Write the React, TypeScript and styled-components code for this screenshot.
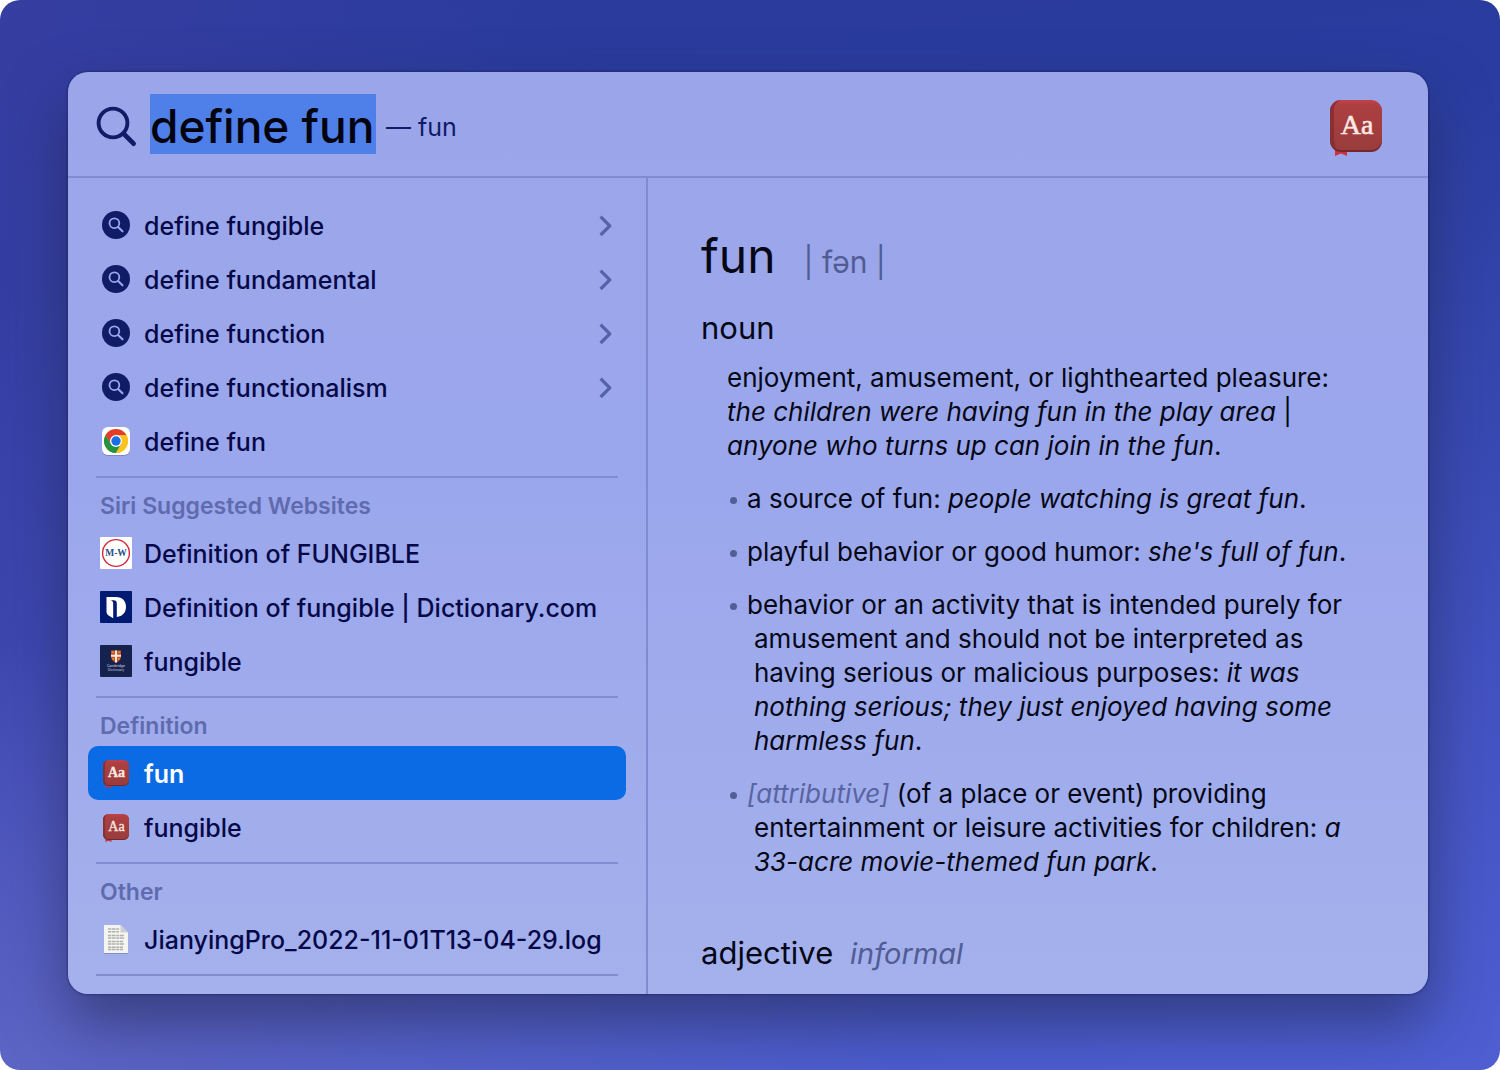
import React from "react";
import styled, { createGlobalStyle } from "styled-components";

const GlobalStyle = createGlobalStyle`
  *, *::before, *::after { box-sizing: border-box; }
  body {
    margin: 0;
    background: #ffffff;
    font-family: Inter, "Liberation Sans", sans-serif;
    -webkit-font-smoothing: antialiased;
  }
  button, input { font: inherit; }
`;

const Desktop = styled.div`
  min-height: 100vh;
  display: flex;
  padding: 72px 72px 76px 68px;
  border-radius: 20px;
  overflow: hidden;
  background:
    radial-gradient(ellipse 60% 40% at 0% 100%, rgba(100, 108, 198, 0.75), rgba(100, 108, 198, 0)),
    linear-gradient(100deg, rgba(68, 66, 168, 0.45), rgba(68, 66, 168, 0) 35%),
    linear-gradient(172deg, #2a3a9b 0%, #2a3c9f 22%, #4453c2 72%, #4f5fd2 100%);
`;

const Panel = styled.main`
  flex: 1;
  display: flex;
  flex-direction: column;
  min-width: 0;
  border-radius: 20px;
  overflow: hidden;
  background: linear-gradient(180deg, #9ba6ea 0%, #9ba7ec 45%, #a4b1ec 100%);
  box-shadow:
    0 0 2px 1px rgba(22, 28, 90, 0.45),
    0 28px 60px rgba(34, 40, 80, 0.6);
`;

const SearchBar = styled.header`
  display: flex;
  align-items: center;
  height: 106px;
  padding: 4px 42px 0 28px;
  border-bottom: 2px solid #808cd0;
`;

const SearchInput = styled.input`
  width: 226px;
  height: 60px;
  margin: 0 10px 4px 13px;
  padding: 4px 0 0;
  border: 0;
  outline: 0;
  border-radius: 0;
  background: #4f80e9;
  color: #02030f;
  font-size: 46px;
  font-weight: 500;
`;

const Completion = styled.span`
  flex: 1;
  padding-top: 2px;
  color: #101a66;
  font-size: 25px;
  line-height: 34px;
`;

const Columns = styled.div`
  flex: 1;
  display: flex;
`;

const Sidebar = styled.nav`
  flex: 0 0 580px;
  padding: 20px 20px 18px;
  border-right: 2px solid #808cd0;
`;

const Section = styled.section`
  padding-bottom: 8px;
  &::after {
    content: "";
    display: block;
    height: 2px;
    margin: 8px 8px -8px;
    background: #808dd0;
  }
`;

const SectionTitle = styled.h2`
  height: 48px;
  margin: 0;
  padding: 13px 12px 0;
  color: #5f6bae;
  font-size: 23px;
  line-height: 30px;
  font-weight: 600;
`;

const ResultList = styled.ul`
  margin: 0;
  padding: 0;
  list-style: none;
`;

const ResultButton = styled.button<{ $selected?: boolean }>`
  display: flex;
  align-items: center;
  gap: 12px;
  width: 100%;
  height: 54px;
  padding: 0 12px;
  border: 0;
  border-radius: 10px;
  background: ${(p) => (p.$selected ? "#0a6be4" : "transparent")};
  color: ${(p) => (p.$selected ? "#ffffff" : "#060848")};
  font-size: 25px;
  font-weight: ${(p) => (p.$selected ? 600 : 500)};
  text-align: left;
  white-space: nowrap;
`;

const IconSlot = styled.span`
  display: flex;
  flex: 0 0 32px;
  justify-content: center;
`;

const ResultLabel = styled.span`
  flex: 1;
  padding-top: 2px;
  line-height: 34px;
`;

const Article = styled.article`
  flex: 1;
  min-width: 0;
  padding: 50px 80px 20px 53px;
  color: #050716;
`;

const WordLine = styled.div`
  display: flex;
  align-items: baseline;
  gap: 28px;
`;

const Word = styled.h1`
  margin: 0;
  font-size: 48px;
  line-height: 56px;
  font-weight: 400;
`;

const Pronunciation = styled.span`
  color: #515c94;
  font-size: 30px;
`;

const PartOfSpeech = styled.h2<{ $first?: boolean }>`
  margin: ${(p) => (p.$first ? "25px 0 14px" : "55px 0 0")};
  font-size: 31px;
  line-height: 38px;
  font-weight: 400;
`;

const Register = styled.em`
  margin-left: 8px;
  color: #515c94;
  font-size: 29px;
`;

const Definition = styled.p`
  margin: 0 0 19px 26px;
  font-size: 26px;
  line-height: 34px;
`;

const Senses = styled.ul`
  display: grid;
  gap: 19px;
  margin: 0 0 0 26px;
  padding: 0;
  list-style: none;
`;

const Sense = styled.li`
  padding-left: 27px;
  text-indent: -27px;
  font-size: 26px;
  line-height: 34px;
  &::before {
    content: "";
    display: inline-block;
    width: 7px;
    height: 7px;
    margin: 0 10px 0 3px;
    border-radius: 50%;
    background: #525e96;
    vertical-align: 4px;
  }
`;

const Usage = styled.em`
  color: #5964a0;
`;

function SearchGlyph() {
  return (
    <svg width="41" height="42" viewBox="0 -1 41 42" fill="none" stroke="#101c66" aria-hidden="true">
      <circle cx="17" cy="17" r="14.400" strokeWidth="3.900" />
      <path d="M27.600 27.600 37.600 37.600" strokeWidth="4.800" strokeLinecap="round" />
    </svg>
  );
}

function SuggestionIcon() {
  return (
    <svg width="28" height="28" viewBox="0 0 28 28" fill="none" aria-hidden="true">
      <circle cx="14" cy="14" r="14" fill="#101c66" />
      <circle cx="12.4" cy="12.2" r="4.9" stroke="#9ba7ec" strokeWidth="1.8" />
      <path d="m16.1 15.9 4.4 4.4" stroke="#9ba7ec" strokeWidth="2.1" strokeLinecap="round" />
    </svg>
  );
}

function Chevron() {
  return (
    <svg width="16" height="24" viewBox="0 0 16 24" fill="none" stroke="#5562a8" aria-hidden="true">
      <path d="m2.600 3.600 9.200 9.200-9.200 9.200" strokeWidth="3.200" strokeLinejoin="round" />
    </svg>
  );
}

function ChromeIcon() {
  return (
    <svg width="30" height="30" viewBox="0 0 30 30" aria-hidden="true">
      <rect x="1" y="2" width="28" height="28" rx="6" fill="#5b68ad" opacity="0.5" />
      <rect x="1" y="1" width="28" height="28" rx="6" fill="#ffffff" />
      <circle cx="15" cy="15" r="12" fill="#fcc31e" />
      <path d="M15 9h10.4A12 12 0 0 0 4.6 9l5.2 9Z" fill="#e33b2e" />
      <path d="M4.6 9A12 12 0 0 0 15 27l5.2-9L15 15 9.8 18Z" fill="#229342" />
      <path d="M25.4 9A12 12 0 0 1 15 27l5.2-9A6 6 0 0 0 15 9Z" fill="#fcc31e" />
      <circle cx="15" cy="15" r="6" fill="#ffffff" />
      <circle cx="15" cy="15" r="4.7" fill="#1a6fe8" />
    </svg>
  );
}

function MerriamIcon() {
  return (
    <svg width="32" height="32" viewBox="0 0 32 32" aria-hidden="true">
      <rect width="32" height="32" rx="1" fill="#ffffff" />
      <circle cx="16" cy="16" r="13.4" fill="none" stroke="#d8283c" strokeWidth="1.4" />
      <text x="16" y="19.4" textAnchor="middle" fontFamily="Liberation Serif, serif" fontWeight="700" fontSize="9.5" fill="#1d4f86">
        M-W
      </text>
    </svg>
  );
}

function DictionaryComIcon() {
  return (
    <svg width="32" height="32" viewBox="0 0 32 32" aria-hidden="true">
      <rect width="32" height="32" rx="1" fill="#001a72" />
      <path d="M6.500 6H16c6.500 0 10 4 10 9.800S22.500 25.500 16.800 26V12.500c0-2-1-3.200-3.200-3.200h-3c1.800.4 2.600 1.500 2.600 3.400v14.500L8.600 24.500C7.200 23.500 6.500 22.400 6.500 20.500Z" fill="#ffffff" />
    </svg>
  );
}

function CambridgeIcon() {
  return (
    <svg width="32" height="32" viewBox="0 0 32 32" aria-hidden="true">
      <rect width="32" height="32" rx="1" fill="#16224e" />
      <path d="M11 5.500h10v6c0 3-2 5-5 6.200-3-1.200-5-3.200-5-6.200Z" fill="#c9502e" />
      <path d="M15 5.500h2v4.200h4v2h-4v5.600l-1 .4-1-.4v-5.600h-4v-2h4Z" fill="#f6ead6" />
      <path d="M12 7h1.500M18.500 7H20M12.500 13.800h1.400M18 13.800h1.500" stroke="#f2b53c" strokeWidth="1.200" />
      <text x="16" y="22" textAnchor="middle" fontFamily="Inter, sans-serif" fontSize="3.400" fill="#c3c8dc">
        Cambridge
      </text>
      <text x="16" y="26" textAnchor="middle" fontFamily="Inter, sans-serif" fontSize="3.400" fill="#a9b0cc">
        Dictionary
      </text>
    </svg>
  );
}

function BookIcon({ size }: { size: number }) {
  return (
    <svg width={size} height={size} viewBox="0 -2 60 60" aria-hidden="true">
      <defs>
        <linearGradient id="cover" x1="0" y1="0" x2="0" y2="1">
          <stop offset="0" stopColor="#c24248" />
          <stop offset="0.12" stopColor="#ac3f41" />
          <stop offset="1" stopColor="#9a3c3c" />
        </linearGradient>
      </defs>
      <path d="M9 50h12v8l-6-2.400-6 2.400Z" fill="#cf3039" />
      <rect x="4" y="3" width="52" height="51" rx="11" fill="#74282b" />
      <rect x="4" y="2" width="52" height="50" rx="11" fill="url(#cover)" />
      <path d="M15 2a11 11 0 0 0-11 11v28a11 11 0 0 0 7 10c-2-3-3-6-3-10V12c0-5 3-8.500 7-10Z" fill="#7f2a2d" opacity="0.7" />
      <text x="31" y="36" textAnchor="middle" fontFamily="Liberation Serif, serif" fontSize="28" fill="#fbe9e2" stroke="#fbe9e2" strokeWidth="0.6">
        Aa
      </text>
    </svg>
  );
}

function LogFileIcon() {
  return (
    <svg width="28" height="32" viewBox="0 0 28 32" aria-hidden="true">
      <path d="M2 3h17l7 7v21H2Z" fill="#5f6cae" opacity="0.5" />
      <path d="M2 2h16.500L26 9.500V30H2Z" fill="#f4f4f1" />
      <path d="M18.500 2 26 9.500h-7.500Z" fill="#cfcfcd" />
      <g stroke="#b0b0ad" strokeWidth="1.500" strokeDasharray="3 .6 4 .7">
        <path d="M6 6h11M6 8.800h11M6 12.500h16M6 15h16M6 18.500h15M6 21h16M6 24.200h15M6 26.500h15" />
      </g>
    </svg>
  );
}

type Result = {
  label: string;
  icon: React.ReactNode;
  chevron?: boolean;
  selected?: boolean;
};

const sections: { title?: string; results: Result[] }[] = [
  {
    results: [
      { label: "define fungible", icon: <SuggestionIcon />, chevron: true },
      { label: "define fundamental", icon: <SuggestionIcon />, chevron: true },
      { label: "define function", icon: <SuggestionIcon />, chevron: true },
      { label: "define functionalism", icon: <SuggestionIcon />, chevron: true },
      { label: "define fun", icon: <ChromeIcon /> },
    ],
  },
  {
    title: "Siri Suggested Websites",
    results: [
      { label: "Definition of FUNGIBLE", icon: <MerriamIcon /> },
      { label: "Definition of fungible | Dictionary.com", icon: <DictionaryComIcon /> },
      { label: "fungible", icon: <CambridgeIcon /> },
    ],
  },
  {
    title: "Definition",
    results: [
      { label: "fun", icon: <BookIcon size={30} />, selected: true },
      { label: "fungible", icon: <BookIcon size={30} /> },
    ],
  },
  {
    title: "Other",
    results: [{ label: "JianyingPro_2022-11-01T13-04-29.log", icon: <LogFileIcon /> }],
  },
];

export default function App() {
  return (
    <>
      <GlobalStyle />
      <Desktop>
        <Panel>
          <SearchBar>
            <SearchGlyph />
            <SearchInput type="text" aria-label="Search" defaultValue="define fun" spellCheck={false} />
            <Completion>— fun</Completion>
            <BookIcon size={60} />
          </SearchBar>
          <Columns>
            <Sidebar>
              {sections.map((section, i) => (
                <Section key={i}>
                  {section.title && <SectionTitle>{section.title}</SectionTitle>}
                  <ResultList>
                    {section.results.map((r) => (
                      <li key={r.label}>
                        <ResultButton type="button" $selected={r.selected}>
                          <IconSlot>{r.icon}</IconSlot>
                          <ResultLabel>{r.label}</ResultLabel>
                          {r.chevron && <Chevron />}
                        </ResultButton>
                      </li>
                    ))}
                  </ResultList>
                </Section>
              ))}
            </Sidebar>
            <Article>
              <WordLine>
                <Word>fun</Word>
                <Pronunciation>| fən |</Pronunciation>
              </WordLine>
              <PartOfSpeech $first>noun</PartOfSpeech>
              <Definition>
                enjoyment, amusement, or lighthearted pleasure:{" "}
                <em>the children were having fun in the play area</em> |{" "}
                <em>anyone who turns up can join in the fun</em>.
              </Definition>
              <Senses>
                <Sense>
                  a source of fun: <em>people watching is great fun</em>.
                </Sense>
                <Sense>
                  playful behavior or good humor: <em>she's full of fun</em>.
                </Sense>
                <Sense>
                  behavior or an activity that is intended purely for amusement and should not be
                  interpreted as having serious or malicious purposes:{" "}
                  <em>it was nothing serious; they just enjoyed having some harmless fun</em>.
                </Sense>
                <Sense>
                  <Usage>[attributive]</Usage> (of a place or event) providing entertainment or
                  leisure activities for children: <em>a 33-acre movie-themed fun park</em>.
                </Sense>
              </Senses>
              <PartOfSpeech>
                adjective <Register>informal</Register>
              </PartOfSpeech>
            </Article>
          </Columns>
        </Panel>
      </Desktop>
    </>
  );
}
